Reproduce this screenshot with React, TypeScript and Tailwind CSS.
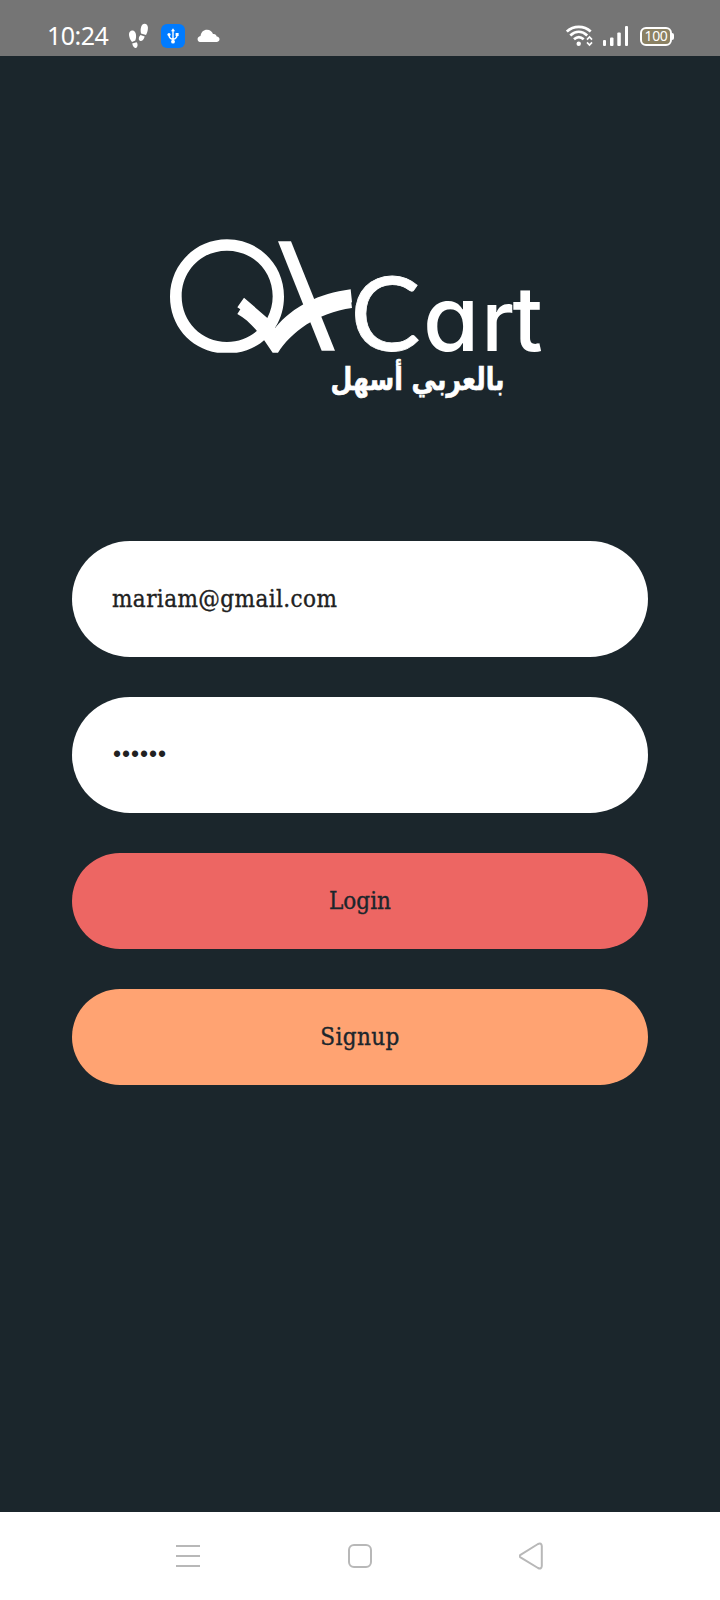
import React from "react";

function Footsteps() {
  return (
    <svg className="h-[26px] w-[22px]" viewBox="0 0 22 26" fill="#fff">
      <path d="M1 12C.7 8.500 3 7 5 7.500C8.300 8.500 8.800 13.500 7.300 17.500L4 19C2.500 17 1.300 15 1 12Z" />
      <path d="M4.200 20.500L8.500 19.300C10 20.500 10 24 8 24.900C6 25.600 4.800 23 4.200 20.500Z" />
      <path d="M13 10.500C11.800 5.500 13.500 .8 16.500 .8C20.800 1 20.800 6.500 18 12Z" />
      <path d="M12.500 12L16.700 13.500C16 16 14.500 18.200 12.300 18C9.800 17.200 10.800 13.500 12.500 12Z" />
    </svg>
  );
}

function Usb() {
  return (
    <div className="flex size-6 items-center justify-center rounded-[6px] bg-[#007bff]">
      <svg className="h-4 w-3" viewBox="0 0 12 16" fill="none" stroke="#fff" strokeWidth="1.4">
        <path d="M6 2V13M6 11.300C3 10.800 2 9.500 2 7M6 11.300C9 10.800 10 9.500 10 7" />
        <path d="M6 .2L8 3.200H4Z" fill="#fff" stroke="none" />
        <circle cx="2" cy="6.500" r="1.600" fill="#fff" stroke="none" />
        <rect x="8.600" y="5" width="3" height="3" fill="#fff" stroke="none" />
        <circle cx="6" cy="13.700" r="1.900" fill="#fff" stroke="none" />
      </svg>
    </div>
  );
}

function StatusBar() {
  return (
    <header className="flex h-14 items-start justify-between bg-[#757575] pr-[46px] pl-[47px] text-white">
      <div className="flex items-center pt-[23px]">
        <span className="relative -top-px w-[63px] font-['Noto_Sans',sans-serif] text-[25px] leading-6 tracking-[-0.5px]">10:24</span>
        <div className="ml-[18px]"><Footsteps /></div>
        <div className="ml-[11px]"><Usb /></div>
        <svg className="ml-3 h-[14px] w-[23px]" viewBox="0 0 23 14" fill="#fff">
          <path d="M3 13C-.3 12.500-.3 7.500 3.500 7C4.300 3 6.500 .8 10 .8C13 .8 15 2.500 16 5C18 4.500 19.300 5.700 19.700 7.500C23.500 8 23.300 12.500 20 13Z" />
        </svg>
      </div>
      <div className="flex items-center pt-[25px]">
        <svg className="h-[22px] w-[27px]" viewBox="0 0 27 22" fill="none" stroke="#fff" strokeWidth="2.700">
          <path d="M.8 6.500C7.500 .2 18 .2 24.700 6.500M4.300 10.500C9.500 5.700 16 5.700 21.200 10.500M8 14.300C11 11.600 14.700 11.600 17.700 14.300" />
          <circle cx="12.700" cy="18.700" r="2.200" fill="#fff" stroke="none" />
          <path d="M21 14.600L23.500 12L26 14.600M21 17.400L23.500 20L26 17.400" strokeWidth="1.700" />
        </svg>
        <svg className="ml-[10px] h-[22px] w-[26px]" viewBox="0 0 26 22" fill="#fff">
          <rect x="0" y="15" width="3" height="6" rx="1" />
          <rect x="7" y="12.500" width="3.500" height="8.500" rx="1" />
          <rect x="14.300" y="7.500" width="3.500" height="13.500" rx="1" />
          <rect x="22" y="1" width="3" height="20" rx="1" />
        </svg>
        <div className="ml-[11px] flex h-[19px] w-8 items-center justify-center rounded-[6px] border-2 border-white bg-[#8b8163] font-['Noto_Sans',sans-serif] text-[14px] leading-none tracking-[-0.4px]">
          100
        </div>
        <div className="h-[7px] w-[2px] rounded-r bg-white" />
      </div>
    </header>
  );
}

function Logo() {
  return (
    <svg className="h-[180px] w-[390px]" viewBox="160 230 390 180" fill="#fff">
      <g transform="translate(160 230) scale(.33333)">
        <path
          fillRule="evenodd"
          d="M172 368C88 355 30 284 30 200C30 104 106 28 201 28C297 28 372 104 372 200C372 284 314 355 230 368ZM201 62C124 62 65 122 65 199C65 276 125 336 201 336C277 336 338 276 338 199C338 122 278 62 201 62Z"
        />
        <path d="M252 203L232 232L241 238L232 252C260 267 287 295 312 330L338 368H354C392 308 470 248 576 234L574 218L576 216L572 178C475 191 401 228 345 294L322 264Z" />
        <path d="M354 34H393L525 362H485Z" />
      </g>
      <text
        className="[font-feature-settings:'cv11'_1]"
        fontFamily="Inter, sans-serif"
        fontSize="92"
        fontWeight="500"
      >
        <tspan x="350.500" y="351" fontFamily="Lato, sans-serif" fontSize="102" fontWeight="400" stroke="#fff" strokeWidth=".8" textLength="70" lengthAdjust="spacingAndGlyphs">C</tspan>
        <tspan x="423" fontSize="91">a</tspan>
        <tspan x="481.500" fontSize="84">r</tspan>
        <tspan x="512.500" fontSize="89">t</tspan>
      </text>
      <text
        x="417.500"
        y="390"
        textAnchor="middle"
        direction="rtl"
        fontFamily="'DejaVu Sans', sans-serif"
        fontWeight="700"
        fontSize="31"
        textLength="174"
        lengthAdjust="spacingAndGlyphs"
        stroke="#fff"
        strokeWidth=".7"
      >
        بالعربي أسهل
      </text>
    </svg>
  );
}

export default function App() {
  return (
    <div className="flex h-[1600px] w-[720px] flex-col overflow-hidden bg-[#1b262c] font-['DejaVu_Serif_Condensed','DejaVu_Serif',serif] text-[24px] text-[#1b262c]">
      <StatusBar />
      <main className="flex flex-1 flex-col px-[72px] pt-[174px]">
        <div className="ml-[88px]"><Logo /></div>
        <form className="mt-[131px] flex flex-col gap-10">
          <div className="flex h-[116px] items-center rounded-full bg-white px-10 tracking-[0.4px] text-[#212121] [-webkit-text-stroke-width:0.35px]">mariam@gmail.com</div>
          <div className="flex h-[116px] items-center rounded-full bg-white pr-10 pb-[2px] pl-[41px] font-['Liberation_Sans',sans-serif] text-[23px] tracking-[0.95px] text-[#212121]">••••••</div>
          <button type="button" className="h-24 rounded-full bg-[#ed6663] [-webkit-text-stroke-width:0.35px]">Login</button>
          <button type="button" className="h-24 rounded-full bg-[#ffa372] tracking-[0.4px] [-webkit-text-stroke-width:0.35px]">Signup</button>
        </form>
      </main>
      <nav className="flex h-[88px] items-center justify-between bg-white px-[175px]">
        <svg className="size-[26px]" viewBox="0 0 26 26" stroke="#b8b8b8" strokeWidth="2">
          <path d="M1 3H25M1 13H25M1 23H25" />
        </svg>
        <svg className="size-[26px]" viewBox="0 0 26 26" fill="none" stroke="#b8b8b8" strokeWidth="2">
          <rect x="2" y="2" width="22" height="22" rx="5" />
        </svg>
        <svg className="h-7 w-[26px]" viewBox="0 0 26 28" fill="none" stroke="#b8b8b8" strokeWidth="2" strokeLinejoin="round">
          <path d="M1.500 12.800Q-.5 14 1.500 15.300L19 26Q22.500 27.500 22.800 24V4Q22.500 .5 19 2Z" />
        </svg>
      </nav>
    </div>
  );
}
